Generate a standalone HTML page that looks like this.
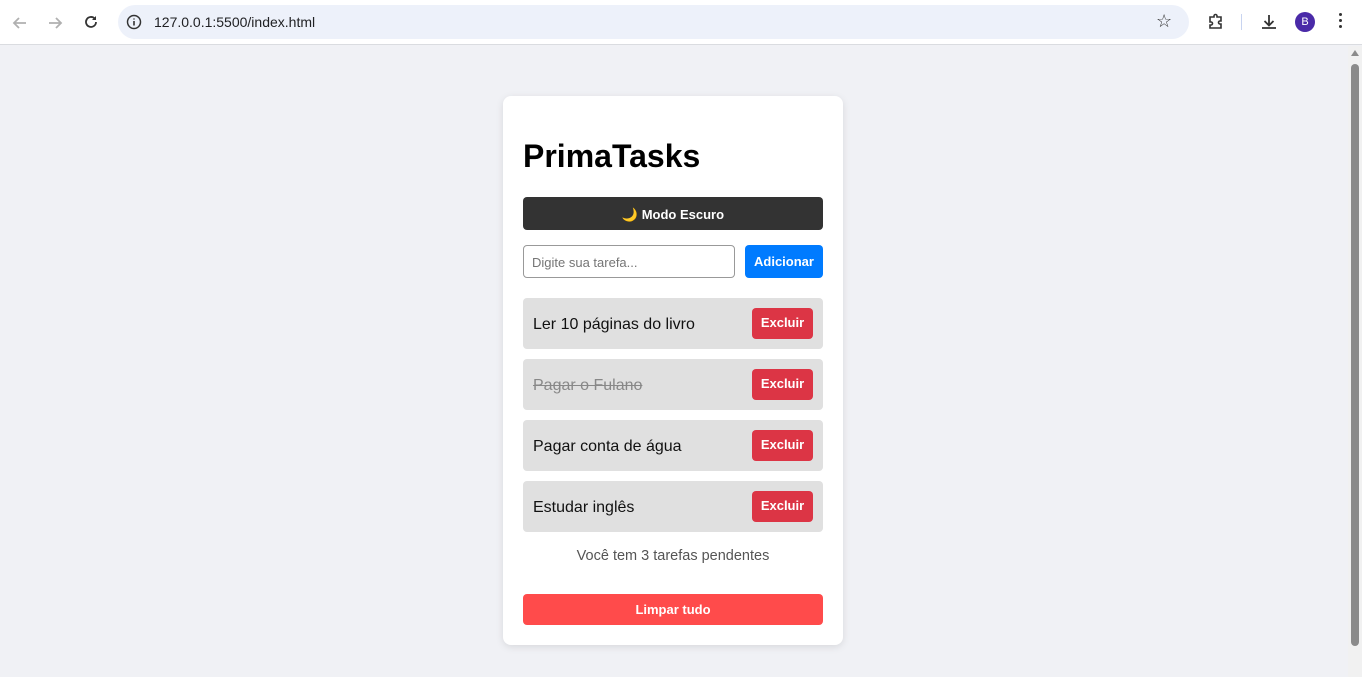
<!DOCTYPE html>
<html><head><meta charset="utf-8"><style>
*{box-sizing:border-box;margin:0;padding:0}
body{width:1362px;height:677px;overflow:hidden;background:#f0f1f5;font-family:"Liberation Sans",sans-serif;position:relative}
.bar{position:absolute;left:0;top:0;width:1362px;height:45px;background:#fff;border-bottom:1px solid #dadce0}
.url{position:absolute;left:118px;top:5px;width:1071px;height:34px;border-radius:17px;background:#edf1fa}
.url span{position:absolute;left:36px;top:9px;font-size:14px;color:#202124}
.abs{position:absolute}
.sb{position:absolute;right:0;top:46px;width:14px;height:631px;background:#f1f1f1}
.thumb{position:absolute;right:3px;top:64px;width:8px;height:582px;background:#8b8b8b;border-radius:4px}
.card{position:absolute;left:503px;top:96px;width:340px;height:549px;background:#fff;border-radius:8px;box-shadow:0 2px 8px rgba(0,0,0,.1)}
h1{position:absolute;left:20px;top:42px;font-size:32px;font-weight:bold;color:#000}
.dark{position:absolute;left:20px;top:101px;width:300px;height:33px;background:#333;border-radius:4px;color:#fff;font-weight:bold;font-size:13px;text-align:center;line-height:35px}
.inp{position:absolute;left:20px;top:149px;width:212px;height:33px;border:1px solid #999;border-radius:4px;font-size:13px;color:#757575;padding:9px 8px}
.add{position:absolute;left:242px;top:149px;width:78px;height:33px;background:#007bff;border-radius:4px;color:#fff;font-weight:bold;font-size:13px;text-align:center;line-height:33px}
.item{position:absolute;left:20px;width:300px;height:51px;background:#e0e0e0;border-radius:4px}
.item span{position:absolute;left:10px;top:18px;font-size:16px;color:#111}
.item b{position:absolute;right:10px;top:10px;width:61px;height:31px;background:#dc3545;border-radius:4px;color:#fff;font-size:13px;text-align:center;line-height:29px}
.cnt{position:absolute;left:0;width:340px;top:452px;text-align:center;font-size:14.5px;color:#555}
.clr{position:absolute;left:20px;top:498px;width:300px;height:31px;background:#ff4b4b;border-radius:4px;color:#fff;font-weight:bold;font-size:13px;text-align:center;line-height:31px}
</style></head><body>
<div class="bar">
<svg class="abs" style="left:10px;top:13px" width="20" height="20" viewBox="0 0 20 20"><path d="M16 10H4M9 5l-5 5 5 5" stroke="#b0b0b0" stroke-width="1.8" fill="none"/></svg>
<svg class="abs" style="left:45px;top:13px" width="20" height="20" viewBox="0 0 20 20"><path d="M4 10h12M11 5l5 5-5 5" stroke="#b0b0b0" stroke-width="1.8" fill="none"/></svg>
<svg class="abs" style="left:81px;top:12px" width="20" height="20" viewBox="0 0 20 20"><path d="M15 10a5 5 0 1 1-1.5-3.6" stroke="#333" stroke-width="1.8" fill="none"/><path d="M15 4v4h-4z" fill="#333"/></svg>
<div class="url"><svg class="abs" style="left:8px;top:9px" width="16" height="16" viewBox="0 0 16 16"><circle cx="8" cy="8" r="6.5" stroke="#333" stroke-width="1.5" fill="none"/><path d="M8 7v4.5M8 4.5v1" stroke="#333" stroke-width="1.6"/></svg><span>127.0.0.1:5500/index.html</span>
<div class="abs" style="left:1038px;top:6px;font-size:18px;color:#333">☆</div></div>
<svg class="abs" style="left:1206px;top:12px" width="20" height="20" viewBox="0 0 20 20"><path d="M4 5h4v-1a1.5 1.5 0 0 1 3 0v1h4v4h-1a1.5 1.5 0 0 0 0 3h1v4H4v-3h1a1.5 1.5 0 0 0 0-3H4z" stroke="#333" stroke-width="1.6" fill="none"/></svg>
<div class="abs" style="left:1241px;top:14px;width:1px;height:16px;background:#c8d4f0"></div>
<svg class="abs" style="left:1259px;top:12px" width="20" height="20" viewBox="0 0 20 20"><path d="M10 3v10M5.5 9l4.5 4.5L14.5 9M3 16h14" stroke="#333" stroke-width="1.8" fill="none"/></svg>
<div class="abs" style="left:1295px;top:12px;width:20px;height:20px;border-radius:50%;background:#4a2aa8;color:#fff;font-size:11px;text-align:center;line-height:20px">B</div>
<div class="abs" style="left:1339px;top:13px;width:3px;height:3px;border-radius:50%;background:#333;box-shadow:0 6px 0 #333,0 12px 0 #333"></div>
</div>
<div class="sb"></div><div class="thumb"></div>
<div class="abs" style="right:3px;top:50px;width:0;height:0;border-left:4px solid transparent;border-right:4px solid transparent;border-bottom:6px solid #8b8b8b"></div>
<div class="card">
<h1>PrimaTasks</h1>
<div class="dark"><span style="color:#f5c542">🌙</span> Modo Escuro</div>
<div class="inp">Digite sua tarefa...</div>
<div class="add">Adicionar</div>
<div class="item" style="top:202px"><span>Ler 10 páginas do livro</span><b>Excluir</b></div>
<div class="item" style="top:263px"><span style="color:#888;text-decoration:line-through">Pagar o Fulano</span><b>Excluir</b></div>
<div class="item" style="top:324px"><span>Pagar conta de água</span><b>Excluir</b></div>
<div class="item" style="top:385px"><span>Estudar inglês</span><b>Excluir</b></div>
<div class="cnt">Você tem 3 tarefas pendentes</div>
<div class="clr">Limpar tudo</div>
</div>
</body></html>
